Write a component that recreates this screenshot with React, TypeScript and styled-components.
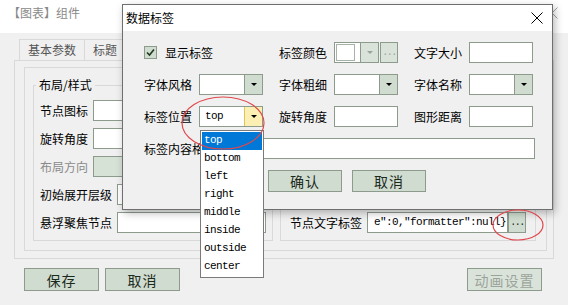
import * as React from "react";
import styled, { createGlobalStyle } from "styled-components";

const colors = {
  face: "#f0f0f0",
  edge: "#d9d9d9",
  field: "#8d9b8d",
  control: "#cfdccf",
  controlOff: "#dae3da",
  fieldOff: "#d7e2d7",
  hot: "#fcefb4",
  hotEdge: "#e2c25c",
  text: "#000000",
  buttonText: "#1c2a1c",
  muted: "#8a8a8a",
  selected: "#0078d7",
  mark: "#e0474c",
};

const mono = `"Liberation Mono", "DejaVu Sans Mono", monospace`;

const positions = ["top", "bottom", "left", "right", "middle", "inside", "outside", "center"];

const labelFormat = 'e":0,"formatter":null}';

const CloseIcon: React.FC<{ color: string }> = ({ color }) => (
  <svg width="12" height="12" viewBox="0 0 12 12">
    <path d="M0.5 0.5 L11.5 11.5 M11.5 0.5 L0.5 11.5" stroke={color} strokeWidth="1" fill="none" />
  </svg>
);

const SelectField: React.FC<{ value?: string; hot?: boolean; options?: string[] }> = ({
  value,
  hot,
  options,
}) => (
  <Select>
    <SelectValue>{value}</SelectValue>
    <SelectArrow $hot={hot} />
    {options && (
      <Options>
        {options.map((o, i) => (
          <Option key={o} $active={i === 0}>
            {o}
          </Option>
        ))}
      </Options>
    )}
  </Select>
);

const App = () => {
  return (
    <>
      <GlobalStyle />
      <Screen>
        <WindowTitle>
          <span>【图表】组件</span>
          <CloseIcon color="#a0a0a0" />
        </WindowTitle>
        <TabStrip>
          <Tab>基本参数</Tab>
          <Tab>标题</Tab>
        </TabStrip>
        <TabPanel>
          <PanelFrame>
            <Group>
              <GroupLegend>布局/样式</GroupLegend>
              <Rows>
                <FieldRow>
                  <FieldLabel>节点图标</FieldLabel>
                  <TextBox />
                </FieldRow>
                <FieldRow>
                  <FieldLabel>旋转角度</FieldLabel>
                  <TextBox />
                </FieldRow>
                <FieldRow>
                  <FieldLabel $disabled>布局方向</FieldLabel>
                  <TextBox $disabled />
                </FieldRow>
                <FieldRow>
                  <FieldLabel>初始展开层级</FieldLabel>
                  <TextBox />
                </FieldRow>
                <FieldRow>
                  <FieldLabel>悬浮聚焦节点</FieldLabel>
                  <TextBox />
                </FieldRow>
              </Rows>
            </Group>
            <SideGroup>
              <Rows $bottom>
                <FieldRow>
                  <FieldLabel>节点文字标签</FieldLabel>
                  <TextBox $width={141}>{labelFormat}</TextBox>
                  <DotsButton>...</DotsButton>
                </FieldRow>
              </Rows>
            </SideGroup>
          </PanelFrame>
        </TabPanel>
        <ActionBar>
          <Button>保存</Button>
          <Button>取消</Button>
          <Spacer />
          <Button $disabled>动画设置</Button>
        </ActionBar>

        <Dialog>
          <DialogHeader>
            <span>数据标签</span>
            <CloseIcon color="#000" />
          </DialogHeader>
          <DialogBody>
            <Cell>
              <CheckBox>
                <svg width="11" height="11" viewBox="0 0 11 11">
                  <path d="M2 5.5 L4.5 8 L9 2.5" stroke="#1e3a1e" strokeWidth="1.6" fill="none" />
                </svg>
              </CheckBox>
              <CheckText>显示标签</CheckText>
            </Cell>
            <Cell>
              <CellLabel>标签颜色</CellLabel>
              <ColorPicker>
                <Swatch>
                  <SwatchInner />
                </Swatch>
                <SelectArrow $off />
                <MiniButton>...</MiniButton>
              </ColorPicker>
            </Cell>
            <Cell>
              <CellLabel>文字大小</CellLabel>
              <TextBox $width={64} />
            </Cell>

            <Cell>
              <CellLabel>字体风格</CellLabel>
              <SelectField />
            </Cell>
            <Cell>
              <CellLabel>字体粗细</CellLabel>
              <SelectField />
            </Cell>
            <Cell>
              <CellLabel>字体名称</CellLabel>
              <SelectField />
            </Cell>

            <Cell>
              <CellLabel>标签位置</CellLabel>
              <SelectField value="top" hot options={positions} />
            </Cell>
            <Cell>
              <CellLabel>旋转角度</CellLabel>
              <TextBox $width={64} />
            </Cell>
            <Cell>
              <CellLabel>图形距离</CellLabel>
              <TextBox $width={64} />
            </Cell>

            <WideCell>
              <CellLabel>标签内容格式</CellLabel>
              <TextBox />
            </WideCell>

            <DialogButtons>
              <Button $small>确认</Button>
              <Button $small>取消</Button>
            </DialogButtons>
          </DialogBody>
        </Dialog>

        <Marks viewBox="0 0 568 305">
          <ellipse cx="223" cy="123" rx="41" ry="26" />
          <ellipse cx="518" cy="225" rx="25" ry="15" />
        </Marks>
      </Screen>
    </>
  );
};

export default App;

const GlobalStyle = createGlobalStyle`
  html, body {
    margin: 0;
    padding: 0;
    background: ${colors.face};
  }
  body {
    font-family: "Noto Sans CJK SC", "Noto Sans", sans-serif;
    font-size: 12px;
    color: ${colors.text};
  }
  * {
    box-sizing: border-box;
  }
`;

const Screen = styled.div`
  position: relative;
  width: 568px;
  height: 305px;
  overflow: hidden;
  background: ${colors.face};
  display: flex;
  flex-direction: column;
`;

const WindowTitle = styled.div`
  height: 33px;
  flex-shrink: 0;
  background: #ffffff;
  display: flex;
  align-items: flex-start;
  justify-content: space-between;
  padding: 5px 10px 0 8px;
  color: ${colors.muted};
  line-height: 16px;

  svg {
    margin-top: 2px;
  }
`;

const TabStrip = styled.div`
  display: flex;
  margin: 6px 0 0 19px;
  height: 21px;
  flex-shrink: 0;
`;

const Tab = styled.div`
  padding: 0 8px;
  border: 1px solid ${colors.edge};
  border-bottom: none;
  line-height: 20px;
  color: #555555;

  & + & {
    border-left: none;
  }
`;

const TabPanel = styled.div`
  margin-left: 14px;
  width: 540px;
  height: 199px;
  flex-shrink: 0;
  border: 1px solid ${colors.edge};
  padding: 6px 6px 7px 9px;
`;

const PanelFrame = styled.div`
  height: 184px;
  border: 1px solid ${colors.edge};
  padding: 9px 10px 0 8px;
  display: flex;
  align-items: flex-start;
  gap: 7px;
`;

const Group = styled.fieldset`
  margin: 0;
  width: 240px;
  height: 164px;
  padding: 7px 6px 7px 6px;
  border: 1px solid ${colors.edge};
  min-width: 0;
`;

const GroupLegend = styled.legend`
  margin-left: -4px;
  padding: 0 3px;
  line-height: 16px;
  font-size: 12px;
`;

const SideGroup = styled.fieldset`
  margin: 8px 0 0 0;
  width: 256px;
  height: 156px;
  padding: 0 9px 7px 9px;
  border: 1px solid ${colors.edge};
  min-width: 0;
`;

const Rows = styled.div<{ $bottom?: boolean }>`
  height: 100%;
  display: flex;
  flex-direction: column;
  justify-content: ${(p) => (p.$bottom ? "flex-end" : "flex-start")};
  gap: 7px;
`;

const FieldRow = styled.div`
  display: flex;
  align-items: center;
  gap: 5px;
  height: 21px;
`;

const FieldLabel = styled.span<{ $disabled?: boolean }>`
  white-space: nowrap;
  line-height: 16px;
  color: ${(p) => (p.$disabled ? colors.muted : colors.text)};
`;

const TextBox = styled.div<{ $width?: number; $disabled?: boolean }>`
  ${(p) => (p.$width ? `width: ${p.$width}px; flex-shrink: 0;` : "flex: 1; min-width: 0;")}
  height: 21px;
  background: ${(p) => (p.$disabled ? colors.fieldOff : "#ffffff")};
  border: 1px solid ${colors.field};
  padding-left: 6px;
  font-family: ${mono};
  font-size: 11px;
  letter-spacing: -0.6px;
  line-height: 19px;
  white-space: nowrap;
  overflow: hidden;
`;

const DotsButton = styled.div`
  width: 18px;
  height: 21px;
  margin-left: -5px;
  flex-shrink: 0;
  background: ${colors.control};
  border: 1px solid ${colors.field};
  text-align: center;
  font-family: ${mono};
  font-size: 10px;
  line-height: 20px;
  letter-spacing: -1.5px;
  color: #222;
`;

const ActionBar = styled.div`
  display: flex;
  align-items: center;
  gap: 6px;
  margin: 9px 26px 0 24px;
`;

const Spacer = styled.div`
  flex: 1;
`;

const Button = styled.div<{ $disabled?: boolean; $small?: boolean }>`
  width: ${(p) => (p.$small ? 74 : 75)}px;
  height: ${(p) => (p.$small ? 22 : 23)}px;
  display: flex;
  align-items: center;
  justify-content: center;
  background: ${(p) => (p.$disabled ? colors.controlOff : colors.control)};
  border: 1px solid ${colors.field};
  color: ${(p) => (p.$disabled ? "#9aa39a" : colors.buttonText)};
  font-size: 14px;
  letter-spacing: 1px;
`;

const Dialog = styled.div`
  position: absolute;
  left: 122px;
  top: 4px;
  width: 431px;
  height: 206px;
  background: ${colors.face};
  border: 1px solid #6f6f6f;
  box-shadow: 2px 3px 8px rgba(0, 0, 0, 0.28);
  z-index: 2;
`;

const DialogHeader = styled.div`
  height: 26px;
  background: #ffffff;
  display: flex;
  align-items: center;
  justify-content: space-between;
  padding: 0 9px 0 3px;
  line-height: 16px;
`;

const DialogBody = styled.div`
  display: grid;
  grid-template-columns: repeat(3, 119px);
  grid-auto-rows: 21px;
  column-gap: 16px;
  row-gap: 11px;
  padding: 11px 0 0 21px;
`;

const Cell = styled.div`
  display: flex;
  align-items: center;
  gap: 7px;
`;

const WideCell = styled(Cell)`
  grid-column: 1 / -1;
  gap: 6px;
  width: 391px;
`;

const CellLabel = styled.span`
  min-width: 48px;
  white-space: nowrap;
  line-height: 16px;
`;

const CheckBox = styled.span`
  width: 13px;
  height: 13px;
  flex-shrink: 0;
  border: 1px solid ${colors.field};
  background: ${colors.control};
  display: flex;
  align-items: center;
  justify-content: center;
`;

const CheckText = styled.span`
  margin-left: 1px;
  line-height: 16px;
`;

const ColorPicker = styled.div`
  display: flex;
  height: 21px;
`;

const Swatch = styled.div`
  width: 27px;
  height: 21px;
  background: #ffffff;
  border: 1px solid ${colors.field};
  padding: 1px 5px 1px 1px;
`;

const SwatchInner = styled.div`
  width: 100%;
  height: 100%;
  border: 1px solid #a8b2a8;
`;

const MiniButton = styled.div`
  width: 18px;
  height: 21px;
  margin-left: 1px;
  background: ${colors.controlOff};
  border: 1px solid ${colors.field};
  text-align: center;
  font-family: ${mono};
  font-size: 10px;
  line-height: 20px;
  letter-spacing: -1.5px;
  color: #9aa39a;
`;

const Select = styled.div`
  position: relative;
  width: 64px;
  height: 21px;
  flex-shrink: 0;
  display: flex;
  background: #ffffff;
  border: 1px solid ${colors.field};
`;

const SelectValue = styled.div`
  flex: 1;
  padding-left: 5px;
  font-family: ${mono};
  font-size: 11px;
  letter-spacing: -0.6px;
  line-height: 19px;
`;

const SelectArrow = styled.div<{ $hot?: boolean; $off?: boolean }>`
  width: 18px;
  height: ${(p) => (p.$off ? "21px" : "auto")};
  flex-shrink: 0;
  background: ${(p) => (p.$hot ? colors.hot : p.$off ? colors.controlOff : colors.control)};
  border-left: 1px solid ${(p) => (p.$hot ? colors.hotEdge : colors.field)};
  ${(p) => (p.$off ? `border: 1px solid ${colors.field}; border-left: none;` : "")}
  display: flex;
  align-items: center;
  justify-content: center;

  &::after {
    content: "";
    border-left: 3px solid transparent;
    border-right: 3px solid transparent;
    border-top: 3px solid ${(p) => (p.$off ? "#9aa39a" : "#000")};
  }
`;

const Options = styled.ul`
  position: absolute;
  top: calc(100% + 4px);
  left: 0;
  width: 64px;
  margin: 0;
  padding: 1px;
  list-style: none;
  background: #ffffff;
  border: 1px solid #7a7a7a;
  z-index: 5;
`;

const Option = styled.li<{ $active?: boolean }>`
  height: 18px;
  padding-left: 2px;
  font-family: ${mono};
  font-size: 11px;
  letter-spacing: -0.6px;
  line-height: 17px;
  background: ${(p) => (p.$active ? colors.selected : "transparent")};
  color: ${(p) => (p.$active ? "#ffffff" : colors.text)};
`;

const DialogButtons = styled.div`
  grid-column: 1 / -1;
  display: flex;
  gap: 10px;
  padding-left: 124px;
`;

const Marks = styled.svg`
  position: absolute;
  left: 0;
  top: 0;
  width: 568px;
  height: 305px;
  pointer-events: none;
  z-index: 10;
  fill: none;
  stroke: ${colors.mark};
  stroke-width: 1.2;
`;
